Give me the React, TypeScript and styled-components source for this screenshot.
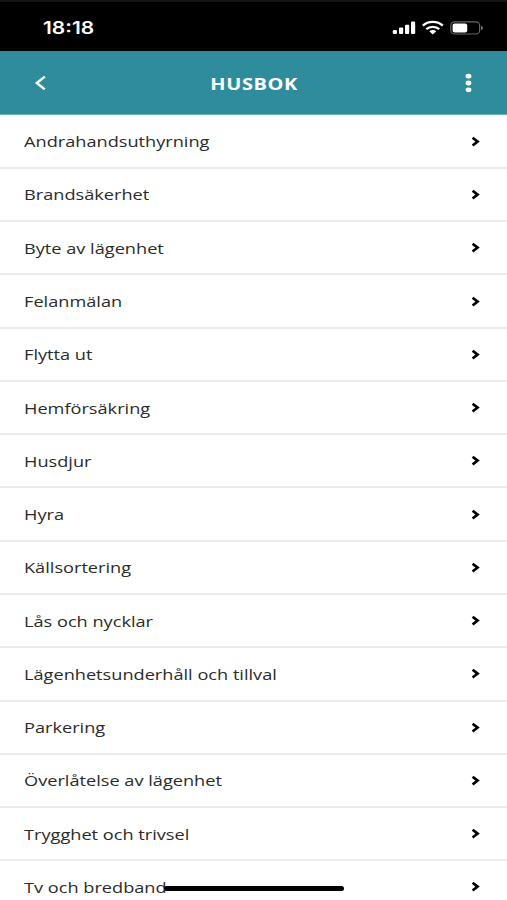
import React from "react";
import styled, { createGlobalStyle } from "styled-components";

const GlobalStyle = createGlobalStyle`
  * { box-sizing: border-box; }
  html, body { margin: 0; padding: 0; background: #fff; }
  body { overflow: hidden; }
`;

const Screen = styled.div`
  position: relative;
  display: flex;
  flex-direction: column;
  width: 507px;
  height: 900px;
  overflow: hidden;
  background: #fff;
  color: #2b2b2b;
  font-family: "Open Sans", "Noto Sans", sans-serif;
`;

const StatusBar = styled.div`
  display: flex;
  flex: none;
  align-items: center;
  justify-content: space-between;
  height: 51px;
  padding: 2px 23px 0 43px;
  background: #000;
  border-top: 2px solid #141414;
  color: #fff;
`;

const Clock = styled.span`
  font: 600 17px/24px Inter, sans-serif;
  transform: scaleX(1.23);
  transform-origin: left center;
`;

const StatusIcons = styled.svg`
  display: block;
  width: 92px;
  height: 16px;
`;

const Header = styled.header`
  display: grid;
  grid-template-columns: 80px 1fr 80px;
  flex: none;
  align-items: center;
  height: 64px;
  background: #2e8c9d;
  border-bottom: 1px solid #70b2be;
  color: #fff;
`;

const Title = styled.h1`
  margin: 0;
  padding: 2px 0 0 1px;
  text-align: center;
  font-size: 16.5px;
  font-weight: 700;
  line-height: 24px;
  letter-spacing: 0.5px;
  transform: scaleX(1.21);
`;

const IconButton = styled.button<{ $end?: boolean }>`
  display: flex;
  align-items: center;
  justify-content: ${(p) => (p.$end ? "flex-end" : "flex-start")};
  height: 63px;
  padding: ${(p) => (p.$end ? "0 35px 0 0" : "0 0 0 34px")};
  border: 0;
  background: none;
  color: inherit;
`;

const List = styled.ul`
  flex: none;
  margin: 0;
  padding: 0.6px 0 0;
  list-style: none;
`;

const Row = styled.li`
  display: flex;
  align-items: center;
  justify-content: space-between;
  height: 53.27px;
  padding: 0 27px 0 24px;
  border-bottom: 2px solid #ebebeb;
`;

const Label = styled.span`
  font-size: 15px;
  line-height: 22px;
  white-space: nowrap;
  transform: scaleX(1.211);
  transform-origin: left center;
`;

const HomeIndicator = styled.div`
  position: absolute;
  left: 164px;
  top: 886px;
  width: 180px;
  height: 5px;
  border-radius: 3px;
  background: #000;
`;

const items = [
  "Andrahandsuthyrning",
  "Brandsäkerhet",
  "Byte av lägenhet",
  "Felanmälan",
  "Flytta ut",
  "Hemförsäkring",
  "Husdjur",
  "Hyra",
  "Källsortering",
  "Lås och nycklar",
  "Lägenhetsunderhåll och tillval",
  "Parkering",
  "Överlåtelse av lägenhet",
  "Trygghet och trivsel",
  "Tv och bredband",
];

const Chevron = () => (
  <svg width="9" height="11" viewBox="0 0 9 11" aria-hidden="true">
    <path d="M1.6 1.7 6.6 5.6 1.6 9.5" fill="none" stroke="#000" strokeWidth="2.7" />
  </svg>
);

export default function App() {
  return (
    <Screen>
      <GlobalStyle />
      <StatusBar>
        <Clock>18:18</Clock>
        <StatusIcons viewBox="0 0 92 16" fill="#fff" aria-hidden="true">
          <rect x="0.8" y="10" width="4.2" height="4" rx="1.2" />
          <rect x="7" y="7.6" width="4.2" height="6.4" rx="1.1" />
          <rect x="13" y="4.8" width="4.2" height="9.2" rx="1.1" />
          <rect x="19" y="1.6" width="4.2" height="12.4" rx="1.1" />
          <g fill="none" stroke="#fff" strokeWidth="2.3">
            <path d="M30.8 5.6C36.3.7 45.3.7 50.8 5.6" />
            <path d="M34.3 9.1c3.5-3.1 9.5-3.1 13 0" />
          </g>
          <path d="M37.3 11.3c2-1.7 5-1.7 7 0L40.8 14.4z" />
          <rect x="58.8" y="1.8" width="28.8" height="12.2" rx="3.8" fill="none" stroke="#666" strokeWidth="1.2" />
          <rect x="60.6" y="3.4" width="14.6" height="9" rx="2" />
          <path d="M89 5.7q2 .7 2 2.2t-2 2.2z" fill="#777" />
        </StatusIcons>
      </StatusBar>
      <Header>
        <IconButton aria-label="Tillbaka">
          <svg width="13" height="16" viewBox="0 0 13 16">
            <path d="M10.8 1.6 2.8 8l8 6.4" fill="none" stroke="#fff" strokeWidth="2.4" />
          </svg>
        </IconButton>
        <Title>HUSBOK</Title>
        <IconButton $end aria-label="Meny">
          <svg width="7" height="20" viewBox="0 0 7 20" fill="#fff">
            <ellipse cx="3.5" cy="3.2" rx="2.9" ry="2.4" />
            <ellipse cx="3.5" cy="10" rx="2.9" ry="2.4" />
            <ellipse cx="3.5" cy="16.8" rx="2.9" ry="2.4" />
          </svg>
        </IconButton>
      </Header>
      <List>
        {items.map((item) => (
          <Row key={item}>
            <Label>{item}</Label>
            <Chevron />
          </Row>
        ))}
      </List>
      <HomeIndicator />
    </Screen>
  );
}
